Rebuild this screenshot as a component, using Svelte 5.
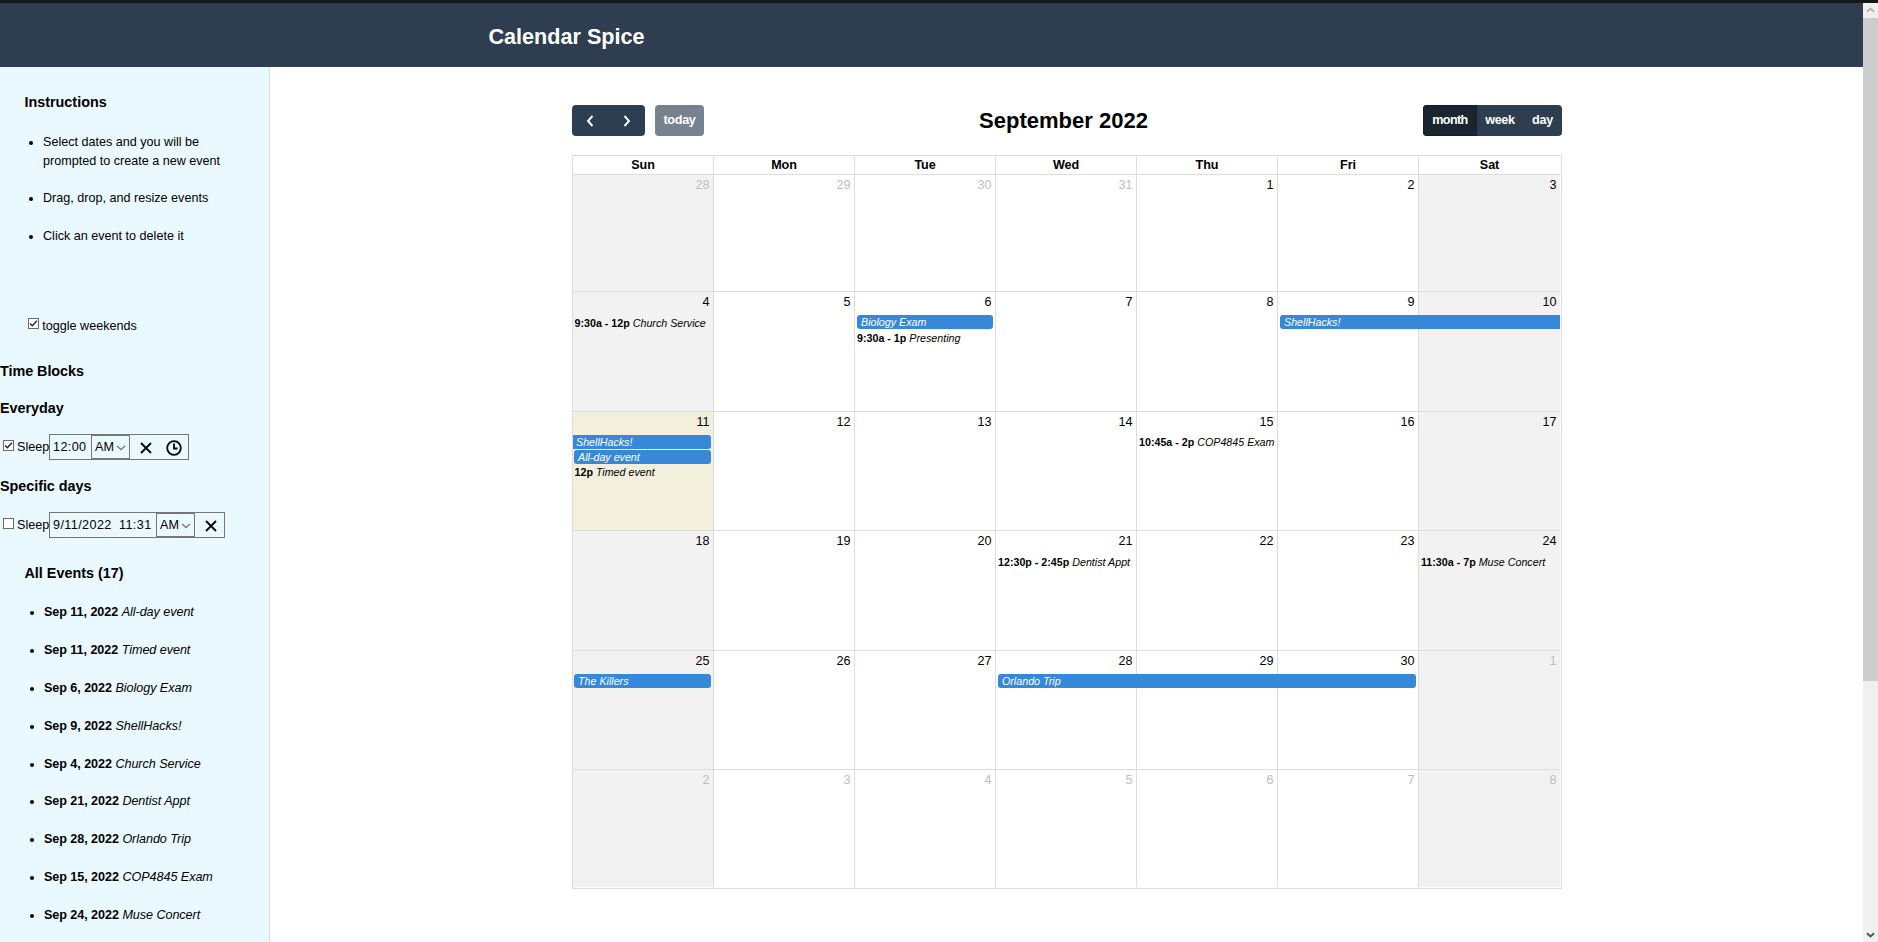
<script lang="ts">
	interface CalEvent {
		title: string;
		time?: string;
		col: number;
		span?: number;
		row?: number;
		cont?: 'start' | 'end';
	}

	interface Week {
		days: number[];
		height: number;
		events: CalEvent[];
	}

	const dayNames = ['Sun', 'Mon', 'Tue', 'Wed', 'Thu', 'Fri', 'Sat'];

	const weeks: Week[] = [
		{ days: [28, 29, 30, 31, 1, 2, 3], height: 117, events: [] },
		{
			days: [4, 5, 6, 7, 8, 9, 10],
			height: 120,
			events: [
				{ title: 'Church Service', time: '9:30a - 12p', col: 0 },
				{ title: 'Biology Exam', col: 2 },
				{ title: 'Presenting', time: '9:30a - 1p', col: 2, row: 1 },
				{ title: 'ShellHacks!', col: 5, span: 2, cont: 'end' }
			]
		},
		{
			days: [11, 12, 13, 14, 15, 16, 17],
			height: 119,
			events: [
				{ title: 'ShellHacks!', col: 0, cont: 'start' },
				{ title: 'All-day event', col: 0, row: 1 },
				{ title: 'Timed event', time: '12p', col: 0, row: 2 },
				{ title: 'COP4845 Exam', time: '10:45a - 2p', col: 4 }
			]
		},
		{
			days: [18, 19, 20, 21, 22, 23, 24],
			height: 120,
			events: [
				{ title: 'Dentist Appt', time: '12:30p - 2:45p', col: 3 },
				{ title: 'Muse Concert', time: '11:30a - 7p', col: 6 }
			]
		},
		{
			days: [25, 26, 27, 28, 29, 30, 1],
			height: 119,
			events: [
				{ title: 'The Killers', col: 0 },
				{ title: 'Orlando Trip', col: 3, span: 3 }
			]
		},
		{ days: [2, 3, 4, 5, 6, 7, 8], height: 118, events: [] }
	];

	const allEvents = [
		{ date: 'Sep 11, 2022', title: 'All-day event' },
		{ date: 'Sep 11, 2022', title: 'Timed event' },
		{ date: 'Sep 6, 2022', title: 'Biology Exam' },
		{ date: 'Sep 9, 2022', title: 'ShellHacks!' },
		{ date: 'Sep 4, 2022', title: 'Church Service' },
		{ date: 'Sep 21, 2022', title: 'Dentist Appt' },
		{ date: 'Sep 28, 2022', title: 'Orlando Trip' },
		{ date: 'Sep 15, 2022', title: 'COP4845 Exam' },
		{ date: 'Sep 24, 2022', title: 'Muse Concert' }
	];

	let weekends = $state(true);
	let everydaySleep = $state(true);
	let specificSleep = $state(false);
	let view = $state('month');

	function isOther(week: number, day: number) {
		return (week === 0 && day > 20) || (week >= 4 && day < 20);
	}
</script>

{#snippet clearIcon()}
	<svg class="clear" viewBox="0 0 12 12" aria-hidden="true"><path d="M1 1l10 10M11 1L1 11" /></svg>
{/snippet}

{#snippet meridiem()}
	<span class="meridiem">
		AM
		<svg viewBox="0 0 10 6" aria-hidden="true"><path d="M1 1l4 3.6L9 1" /></svg>
	</span>
{/snippet}

{#snippet check(checked: boolean, toggle: () => void, label: string)}
	<button type="button" class="check" role="checkbox" aria-checked={checked} aria-label={label} onclick={toggle}>
		{#if checked}
			<svg viewBox="0 0 9 9" aria-hidden="true"><path d="M1 4.5l2.3 2.3L8 1.8" /></svg>
		{/if}
	</button>
{/snippet}

<div class="page">
	<header><h1>Calendar Spice</h1></header>

	<div class="body">
		<aside>
			<section class="instructions">
				<h2>Instructions</h2>
				<ul>
					<li>Select dates and you will be prompted to create a new event</li>
					<li>Drag, drop, and resize events</li>
					<li>Click an event to delete it</li>
				</ul>
			</section>

			<div class="toggle">
				{@render check(weekends, () => (weekends = !weekends), 'toggle weekends')}
				<span>toggle weekends</span>
			</div>

			<section class="blocks">
				<h2>Time Blocks</h2>
				<h2>Everyday</h2>
				<div class="block-row">
					{@render check(everydaySleep, () => (everydaySleep = !everydaySleep), 'Sleep everyday')}
					<span class="name">Sleep</span>
					<div class="picker">
						<span class="time">12:00</span>
						{@render meridiem()}
						{@render clearIcon()}
						<svg class="clock" viewBox="0 0 16 16" aria-hidden="true">
							<circle cx="8" cy="8" r="6.8" />
							<path d="M8 3.5V8.5H11.5" />
						</svg>
					</div>
				</div>
				<h2>Specific days</h2>
				<div class="block-row">
					{@render check(specificSleep, () => (specificSleep = !specificSleep), 'Sleep on specific days')}
					<span class="name">Sleep</span>
					<div class="picker dated">
						<span class="date">9/11/2022</span>
						<span class="time">11:31</span>
						{@render meridiem()}
						{@render clearIcon()}
					</div>
				</div>
			</section>

			<section class="all-events">
				<h2>All Events (17)</h2>
				<ul>
					{#each allEvents as event}
						<li><b>{event.date}</b> <i>{event.title}</i></li>
					{/each}
				</ul>
			</section>
		</aside>

		<main>
			<div class="calendar">
				<div class="toolbar">
					<div class="side">
						<div class="group nav">
							<button type="button" aria-label="Previous">
								<svg viewBox="0 0 8 12" aria-hidden="true"><path d="M6.5 1L2 6l4.5 5" /></svg>
							</button>
							<button type="button" aria-label="Next">
								<svg viewBox="0 0 8 12" aria-hidden="true"><path d="M1.5 1L6 6l-4.5 5" /></svg>
							</button>
						</div>
						<button type="button" class="today-button">today</button>
					</div>
					<h2>September 2022</h2>
					<div class="side">
						<div class="group views">
							{#each ['month', 'week', 'day'] as name}
								<button type="button" class:active={view === name} onclick={() => (view = name)}>{name}</button>
							{/each}
						</div>
					</div>
				</div>

				<div class="grid">
					<div class="day-names">
						{#each dayNames as name}
							<div>{name}</div>
						{/each}
					</div>
					{#each weeks as week, w}
						<div class="week" style="height: {week.height}px">
							{#each week.days as day, d}
								<div
									class="cell"
									class:weekend={d === 0 || d === 6}
									class:today={w === 2 && d === 0}
									class:other={isOther(w, day)}
									style="grid-column: {d + 1}"
								>
									<span>{day}</span>
								</div>
							{/each}
							{#each week.events as event}
								<div
									class="event {event.cont ? `cont-${event.cont}` : ''}"
									class:timed={event.time}
									class:sunday={event.col === 0}
									style="grid-column: {event.col + 1} / span {event.span ?? 1}; grid-row: {(event.row ?? 0) + 2}"
								>
									{#if event.time}<b>{event.time}</b>{/if}
									<i>{event.title}</i>
								</div>
							{/each}
						</div>
					{/each}
				</div>
			</div>
		</main>
	</div>

	<div class="scrollbar">
		<svg class="up" viewBox="0 0 9 6" aria-hidden="true"><path d="M1 4.8L4.5 1.5 8 4.8" /></svg>
		<div class="thumb"></div>
		<svg class="down" viewBox="0 0 9 6" aria-hidden="true"><path d="M1 1.2l3.5 3.3L8 1.2" /></svg>
	</div>
</div>

<style>
	:global(body) {
		margin: 0;
		overflow: hidden;
	}
	.page {
		display: grid;
		grid-template-columns: 1fr 15px;
		grid-template-rows: 64px 1fr;
		height: 942px;
		box-sizing: border-box;
		border-top: 3px solid #151716;
		background: #fff;
		color: #000;
		font-family: 'Liberation Sans', Arial, Helvetica, sans-serif;
		font-size: 12.6px;
		line-height: 18.9px;
		overflow: hidden;
	}
	h1,
	h2,
	ul {
		margin: 0;
		padding: 0;
	}
	h2 {
		font-size: 14.4px;
		line-height: 21px;
	}
	button {
		font: inherit;
		border: none;
		padding: 0;
	}
	svg {
		display: block;
		fill: none;
		stroke: currentColor;
	}
	header {
		background: #2e3e50;
		color: #fff;
		padding: 21px 0 0 488.5px;
	}
	h1 {
		font-size: 21.6px;
		line-height: 26px;
	}
	.body {
		grid-row: 2;
		display: flex;
		min-height: 0;
	}
	aside {
		width: 269px;
		flex: none;
		background: #eaf9ff;
		border-right: 1px solid #d3e2e8;
		overflow: hidden;
	}
	li {
		margin-bottom: 18.9px;
	}
	.instructions {
		padding: 25px 25px 0 24.4px;
	}
	.instructions ul {
		padding-left: 18.6px;
		margin-top: 19.7px;
	}
	.toggle {
		display: flex;
		gap: 3.3px;
		padding-left: 28px;
		margin-top: 71.3px;
	}
	.check {
		width: 11px;
		height: 11px;
		box-sizing: border-box;
		background: #fff;
		border: 1px solid #6b6b6b;
		color: #222;
		margin-top: 1px;
		flex: none;
	}
	.check svg {
		width: 9px;
		height: 9px;
		stroke-width: 1.3;
	}
	.blocks h2 {
		margin-top: 16px;
		letter-spacing: -0.05px;
	}
	.blocks h2:first-child {
		margin-top: 25px;
	}
	.block-row {
		display: flex;
		align-items: center;
		height: 26px;
		margin-top: 15px;
		padding-left: 3px;
	}
	.block-row .check {
		margin: 0 3px 4px 0;
	}
	.name {
		width: 32px;
	}
	.picker {
		display: flex;
		align-items: center;
		height: 26px;
		width: 140px;
		box-sizing: border-box;
		border: 1px solid #767676;
		padding-left: 3px;
	}
	.picker.dated {
		width: 176px;
	}
	.time {
		width: 38px;
		letter-spacing: 0.4px;
	}
	.date {
		width: 66px;
		letter-spacing: 0.4px;
	}
	.dated .time {
		width: 37px;
	}
	.meridiem {
		display: flex;
		align-items: center;
		gap: 2px;
		width: 39px;
		height: 24px;
		box-sizing: border-box;
		border: 1px solid #767676;
		padding-left: 3px;
	}
	.meridiem svg {
		width: 10px;
		height: 6px;
		margin-top: 2px;
		stroke: #777;
		stroke-width: 1.3;
	}
	.clear {
		width: 12px;
		height: 12px;
		margin: 2px 0 0 10px;
		stroke-width: 1.8;
	}
	.clock {
		width: 16px;
		height: 16px;
		margin: 2px 0 0 14px;
		stroke-width: 1.8;
	}
	.all-events {
		padding: 25px 0 0 24.4px;
	}
	.all-events ul {
		padding-left: 19.5px;
		margin-top: 19.2px;
		letter-spacing: -0.05px;
	}
	main {
		flex: 1;
		padding: 38px 1px 0 0;
	}
	.calendar {
		width: 990px;
		margin: 0 auto;
		position: relative;
		left: 1px;
	}
	.toolbar {
		display: flex;
		align-items: center;
		justify-content: space-between;
		height: 31px;
		margin-bottom: 19px;
	}
	.toolbar h2 {
		font-size: 22px;
		line-height: 31px;
	}
	.side {
		display: flex;
		gap: 10px;
	}
	.group {
		display: flex;
		border-radius: 4px;
		overflow: hidden;
	}
	.toolbar button {
		height: 31px;
		background: #2c3e50;
		color: #fff;
		font-weight: bold;
		letter-spacing: -0.3px;
	}
	.nav button {
		width: 36.5px;
	}
	.nav svg {
		width: 8px;
		height: 12px;
		margin: 0 auto;
		stroke-width: 1.9;
	}
	.toolbar .today-button {
		width: 49px;
		border-radius: 4px;
		background: #76828d;
	}
	.views button:nth-child(1) {
		width: 54px;
		letter-spacing: -0.6px;
	}
	.views button:nth-child(2) {
		width: 46px;
	}
	.views button:nth-child(3) {
		width: 39px;
	}
	.toolbar .active {
		background: #1a252f;
		box-shadow: inset 0 0 0 1px #151e27;
	}
	.grid {
		border: 1px solid #ddd;
		padding: 0 1px 1px 0;
	}
	.day-names {
		display: grid;
		grid-template-columns: repeat(7, 141px);
		height: 18px;
		text-align: center;
		font-weight: bold;
		line-height: 18px;
		letter-spacing: -0.1px;
	}
	.day-names div {
		border-right: 1px solid #ddd;
	}
	.day-names div:last-child {
		border-right: none;
	}
	.week {
		display: grid;
		grid-template-columns: repeat(7, 141px);
		grid-template-rows: 24px 15px 15px 15px 1fr;
	}
	.cell {
		grid-row: 1 / -1;
		border-top: 1px solid #ddd;
		border-right: 1px solid #ddd;
		padding: 1px 3.5px 0;
		text-align: right;
	}
	.cell:nth-child(7) {
		border-right: none;
	}
	.weekend {
		background: #f2f2f2;
	}
	.today {
		background: #f2efdc;
	}
	.other {
		color: #bdbdbd;
	}
	.event {
		height: 14px;
		margin: 0 3px 0 2px;
		padding-left: 4px;
		box-sizing: border-box;
		border-radius: 3px;
		background: #3788d8;
		color: #fff;
		font-size: 10.7px;
		line-height: 14px;
		white-space: nowrap;
	}
	.sunday {
		margin-left: 1px;
	}
	.cont-start {
		margin-left: 0;
		padding-left: 3px;
		border-radius: 0 3px 3px 0;
	}
	.cont-end {
		margin-right: 0;
		border-radius: 3px 0 0 3px;
	}
	.timed {
		padding-left: 0;
		margin-right: 0;
		background: none;
		color: #000;
		line-height: 15px;
	}
	.timed.sunday {
		padding-left: 0.5px;
	}
	/* taller weeks sit their timed entries one pixel lower */
	.week:nth-child(odd) .timed {
		line-height: 17px;
	}
	.scrollbar {
		grid-column: 2;
		grid-row: 1 / -1;
		display: flex;
		flex-direction: column;
		align-items: center;
		background: #f0f0f0;
		color: #555;
	}
	.scrollbar svg {
		width: 9px;
		height: 6px;
		stroke-width: 2;
	}
	.scrollbar .up {
		margin: 4px 0 5px;
		color: #b5b5b5;
	}
	.scrollbar .down {
		margin: auto 0 4px;
	}
	.thumb {
		align-self: stretch;
		height: 663px;
		background: #cdcdcd;
	}
</style>
